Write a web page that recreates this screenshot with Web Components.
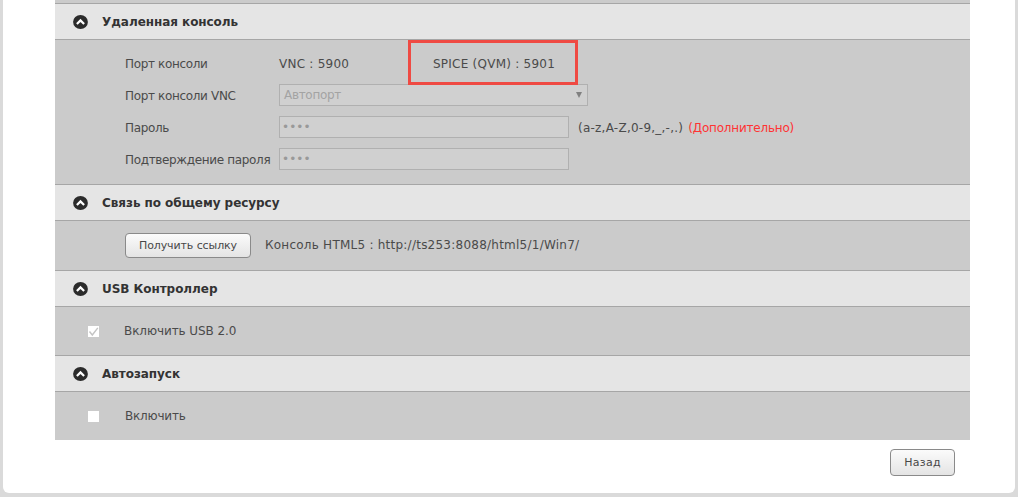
<!DOCTYPE html>
<html><head><meta charset="utf-8"><style>
html,body{margin:0;padding:0;height:497px;overflow:hidden;background:#dadada;}
body{font:12px "DejaVu Sans",sans-serif;color:#4a4a4a;}
.lat{letter-spacing:.24px;padding-top:2px}
.red{letter-spacing:-.2px;color:#f33;margin-left:5px;padding-top:2px}
</style></head><body>
<vm-page>
  <div style="height:3px;background:#cbcbcb"></div>
  <vm-section title="Удаленная консоль" style="--body-h:144px">
    <div style="display:flex;flex-direction:column;padding-top:7px">
      <vm-row label="Порт консоли" style="height:32px"><span class="lat" style="width:154px">VNC : 5900</span><span class="lat" style="position:relative;display:inline-block">SPICE (QVM) : 5901<vm-mark></vm-mark></span></vm-row>
      <vm-row label="Порт консоли VNC" style="height:32px"><vm-select>Автопорт</vm-select></vm-row>
      <vm-row label="Пароль" style="height:32px"><vm-input></vm-input><span class="lat" style="margin-left:9px">(a-z,A-Z,0-9,_,-,.)</span><span class="red">(Дополнительно)</span></vm-row>
      <vm-row label="Подтверждение пароля" style="height:32px"><vm-input></vm-input></vm-row>
    </div>
  </vm-section>
  <vm-section title="Связь по общему ресурсу" style="--body-h:49px">
    <div style="display:flex;align-items:center;height:49px;padding-left:70px"><vm-button style="width:126px;height:25px;--ls:-.1px">Получить ссылку</vm-button><span class="lat" style="margin-left:14px;padding:0 0 2px">Консоль HTML5 : http://ts253:8088/html5/1/Win7/</span></div>
  </vm-section>
  <vm-section title="USB Контроллер" style="--body-h:48px">
    <vm-check checked label="Включить USB 2.0" style="height:48px;--lm:25px;--cls:-.08px"></vm-check>
  </vm-section>
  <vm-section title="Автозапуск" style="--body-h:48px">
    <vm-check label="Включить" style="height:48px"></vm-check>
  </vm-section>
  <div style="display:flex;justify-content:flex-end;padding:9px 15px 0 0"><vm-button style="width:65px;height:27px;--ls:.3px">Назад</vm-button></div>
</vm-page>
<script>
function def(name,html,init){customElements.define(name,class extends HTMLElement{
  constructor(){super();const s=this.attachShadow({mode:"open"});s.innerHTML=html;}
  connectedCallback(){if(init)init(this);}
});}
def("vm-page",`<style>
:host{display:block;box-sizing:border-box;margin:0 3px 0 3px;height:493px;background:#fff;border-radius:0 0 6px 6px;padding:0 45px 0 52px;}
</style><slot></slot>`);
def("vm-section",`<style>
:host{display:block;}
.h{box-sizing:border-box;height:37px;display:flex;align-items:center;background:#e5e5e5;border-top:1px solid #a6a6a6;border-bottom:1px solid #a6a6a6;padding-left:18px;}
.t{margin-left:14px;font-weight:bold;color:#333;font-size:12px;letter-spacing:-.05px}
.b{background:#cbcbcb;height:var(--body-h);}
svg{display:block}
</style><div class="h"><svg width="15" height="14" viewBox="0 0 15 14"><ellipse cx="7.5" cy="7" rx="7.4" ry="6.9" fill="#2b2b2b"/><path d="M3.9 9 7.5 5.4 11.1 9" fill="none" stroke="#fff" stroke-width="2.2"/></svg><span class="t"></span></div><div class="b"><slot></slot></div>`,
el=>{el.shadowRoot.querySelector(".t").textContent=el.getAttribute("title");});
def("vm-row",`<style>
:host{display:flex;align-items:center;padding-left:70px;}
.l{width:154px;flex:none;letter-spacing:-.34px;white-space:nowrap;padding-top:2px}
</style><span class="l"></span><slot></slot>`,el=>{el.shadowRoot.querySelector(".l").textContent=el.getAttribute("label");});
def("vm-select",`<style>
:host{box-sizing:border-box;display:flex;align-items:center;justify-content:space-between;width:309px;height:22px;background:#d0d0d0;border:1px solid #b0b0b0;padding:0 5px 0 4px;color:#a3a3a3;letter-spacing:-.3px}
i{width:0;height:0;border-left:3.5px solid transparent;border-right:3.5px solid transparent;border-top:6px solid #808080;}
</style><slot></slot><i></i>`);
def("vm-input",`<style>
:host{box-sizing:border-box;display:flex;align-items:center;width:290px;height:22px;background:#d0d0d0;border:1px solid #b0b0b0;padding-left:2px;color:#999;font-size:12px;letter-spacing:.1px;}
</style>••••`);
def("vm-mark",`<style>
:host{position:absolute;left:-25px;top:-15px;width:170px;height:45px;box-sizing:border-box;border:3px solid #ef4a43;pointer-events:none;}
</style>`);
def("vm-button",`<style>
:host{box-sizing:border-box;display:flex;align-items:center;justify-content:center;flex:none;border:1px solid #8a8a8a;border-radius:4px;background:linear-gradient(#fbfbfb,#e4e4e4);color:#484848;font-size:11px;letter-spacing:var(--ls,0);}
</style><slot></slot>`);
def("vm-check",`<style>
:host{display:flex;align-items:center;padding-left:33px;}
.c{width:11px;height:11px;background:#fff;flex:none;margin-right:var(--lm,26px);display:block}
.l{letter-spacing:var(--cls,-.2px)}
</style><svg class="c" viewBox="0 0 11 11"><path class="p" d="M1.5 5.5 4.3 9 9.8 1.8" fill="none" stroke="#c4c4c4" stroke-width="1.4"/></svg><span class="l"></span>`,
el=>{el.shadowRoot.querySelector(".l").textContent=el.getAttribute("label");if(!el.hasAttribute("checked"))el.shadowRoot.querySelector(".p").remove();});
</script>
</body></html>
